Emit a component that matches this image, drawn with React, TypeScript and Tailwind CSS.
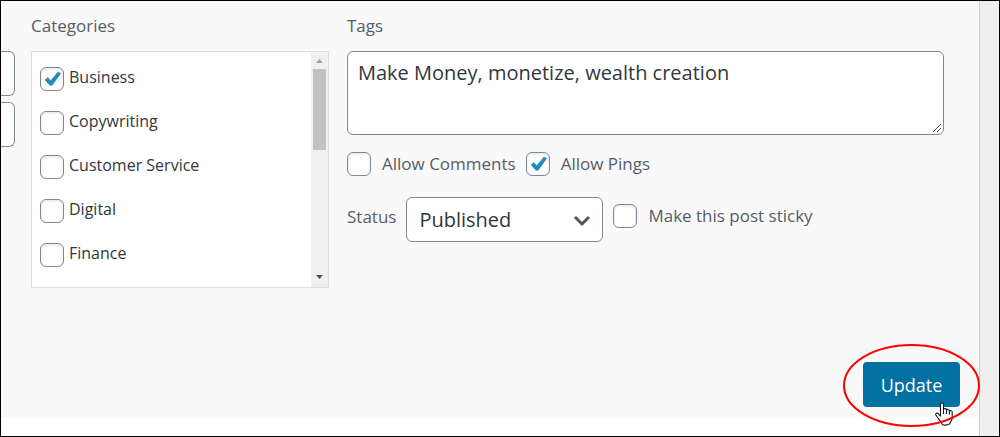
import type { ReactNode } from "react";

const categories = [
  { name: "Business", checked: true },
  { name: "Copywriting", checked: false },
  { name: "Customer Service", checked: false },
  { name: "Digital", checked: false },
  { name: "Finance", checked: false },
];

interface CheckboxProps {
  id: string;
  defaultChecked?: boolean;
}

function Checkbox({ id, defaultChecked }: CheckboxProps) {
  return (
    <span className="relative block size-6 shrink-0">
      <input
        id={id}
        type="checkbox"
        defaultChecked={defaultChecked}
        className="peer block size-6 appearance-none rounded-md border border-[#7e8993] bg-white shadow-[inset_0_1px_3px_rgba(0,0,0,0.12)]"
      />
      <svg
        viewBox="0 0 24 24"
        className="pointer-events-none absolute inset-0 hidden size-6 peer-checked:block"
        aria-hidden
      >
        <path
          d="M5.2 12.9 7.8 10.6 10.7 13.8 18 5 20.6 6.4 12.2 18.2H9.8Z"
          fill="#1e8cbe"
          stroke="#1e8cbe"
          strokeWidth="0.6"
          strokeLinejoin="round"
        />
      </svg>
    </span>
  );
}

function Option({ id, defaultChecked, children }: CheckboxProps & { children: ReactNode }) {
  return (
    <div className="flex items-center gap-[11px] text-[17px] leading-6">
      <Checkbox id={id} defaultChecked={defaultChecked} />
      <label htmlFor={id}>{children}</label>
    </div>
  );
}

function CategoryList() {
  return (
    <div className="flex h-[237px] overflow-hidden border border-[#dddddd] bg-white">
      <ul className="flex-1 pt-[5px] pl-2 text-[#32373c]">
        {categories.map(({ name, checked }) => {
          const id = `category-${name.toLowerCase().replace(" ", "-")}`;
          return (
            <li key={name} className="flex h-11 items-center gap-[5px]">
              <Checkbox id={id} defaultChecked={checked} />
              <label htmlFor={id} className="pb-1 leading-6">
                {name}
              </label>
            </li>
          );
        })}
      </ul>
      <div className="flex w-[17px] flex-col items-center justify-between bg-[#f0f0f0]" aria-hidden>
        <div className="flex w-full flex-col items-center">
          <svg viewBox="0 0 17 17" className="size-[17px]">
            <path d="M5 11h7L8.5 7Z" fill="#a3a3a3" />
          </svg>
          <div className="h-[81px] w-[13px] bg-[#c1c1c1]" />
        </div>
        <svg viewBox="0 0 17 17" className="size-[17px]">
          <path d="M5 5h7L8.5 9Z" fill="#505050" />
        </svg>
      </div>
    </div>
  );
}

function HandCursor() {
  return (
    <svg
      viewBox="0 0 18 24"
      className="pointer-events-none absolute top-10 left-[72px] h-6 w-[18px]"
      aria-hidden
    >
      <path
        d="M5.5 14V2.2C5.5.5 8.5.5 8.5 2.2V7.2C9.3 6.2 11.4 6.4 11.5 7.8 12.4 7 14.3 7.4 14.4 8.8 15.2 8.2 17.2 8.6 17.2 10V16C17.2 18.5 15.3 19.5 14.8 21.8Q11 24.2 7.2 22.4C6.6 19.8 4.2 18 3 16L.9 13C.2 11.6 2 10.4 3.2 11.6Z"
        fill="white"
        stroke="#10152b"
        strokeWidth="1.1"
        strokeLinejoin="round"
      />
      <path d="M8.5 7V12M11.5 7.8V12M14.4 8.8V12.5" fill="none" stroke="#10152b" strokeWidth="1.1" />
    </svg>
  );
}

export default function App() {
  return (
    <div className="flex min-h-screen border border-black bg-white font-['Open_Sans','Noto_Sans',sans-serif] text-base text-[#555d66]">
      <div className="flex min-w-0 flex-1 flex-col border-r border-[#cccccc]">
        <main className="flex flex-1 flex-col justify-between bg-[#f9f9f9] pb-[10px]">
          <div className="flex items-start pt-[13px] pr-[35px]">
            <div className="mt-[37px] mr-4 flex w-[14px] shrink-0 flex-col gap-[6px]">
              <input
                aria-label="Title"
                className="h-[45px] w-full rounded-r-md border border-l-0 border-[#7e8993] bg-white"
              />
              <input
                aria-label="Slug"
                className="h-[45px] w-full rounded-r-md border border-l-0 border-[#7e8993] bg-white"
              />
            </div>

            <section className="w-[298px] shrink-0">
              <h2 className="mb-[13px] text-[17px] leading-6">Categories</h2>
              <CategoryList />
            </section>

            <section className="ml-[18px] min-w-0 flex-1">
              <label htmlFor="tags" className="mb-[13px] block text-[17px] leading-6">
                Tags
              </label>
              <div className="relative">
                <textarea
                  id="tags"
                  defaultValue="Make Money, monetize, wealth creation"
                  className="block h-[84px] w-full resize-none rounded-md border border-[#7e8993] bg-white px-[10px] py-[6px] text-xl leading-[30px] text-[#32373c]"
                />
                <svg
                  viewBox="0 0 10 10"
                  className="pointer-events-none absolute right-[2px] bottom-[2px] size-[10px]"
                  aria-hidden
                >
                  <path d="M1 9 9 1M5 9 9 5" stroke="#555555" strokeWidth="1" />
                </svg>
              </div>

              <div className="mt-[17px] flex gap-[10px]">
                <Option id="allow-comments">Allow Comments</Option>
                <Option id="allow-pings" defaultChecked>
                  Allow Pings
                </Option>
              </div>

              <div className="mt-[21px] flex items-start gap-[10px]">
                <label htmlFor="status" className="pt-2 text-[17px] leading-6">
                  Status
                </label>
                <div className="relative">
                  <select
                    id="status"
                    className="block h-[45px] w-[197px] appearance-none rounded-md border border-[#7e8993] bg-white px-3 text-xl text-[#32373c]"
                  >
                    <option>Published</option>
                  </select>
                  <svg
                    viewBox="0 0 18 12"
                    className="pointer-events-none absolute top-[18px] right-3 h-3 w-[18px]"
                    aria-hidden
                  >
                    <path d="M2 2 9 9 16 2" fill="none" stroke="#555555" strokeWidth="3" />
                  </svg>
                </div>
                <div className="pt-[7px]">
                  <Option id="sticky">Make this post sticky</Option>
                </div>
              </div>
            </section>
          </div>

          <div className="flex justify-end pr-[19px]">
            <div className="relative">
              <button
                type="button"
                className="block h-[45px] w-[97px] rounded bg-[#0071a1] text-lg text-white"
              >
                Update
              </button>
              <HandCursor />
              <svg
                viewBox="0 0 137 84"
                className="pointer-events-none absolute -top-[18px] -left-5 h-[84px] w-[137px] max-w-none"
                aria-hidden
              >
                <ellipse cx="68.5" cy="41.5" rx="67.5" ry="40.5" fill="none" stroke="#ff0000" strokeWidth="2" />
              </svg>
            </div>
          </div>
        </main>
        <div className="h-[19px]" />
      </div>
      <div className="w-[19px] bg-[#efefef]" />
    </div>
  );
}
